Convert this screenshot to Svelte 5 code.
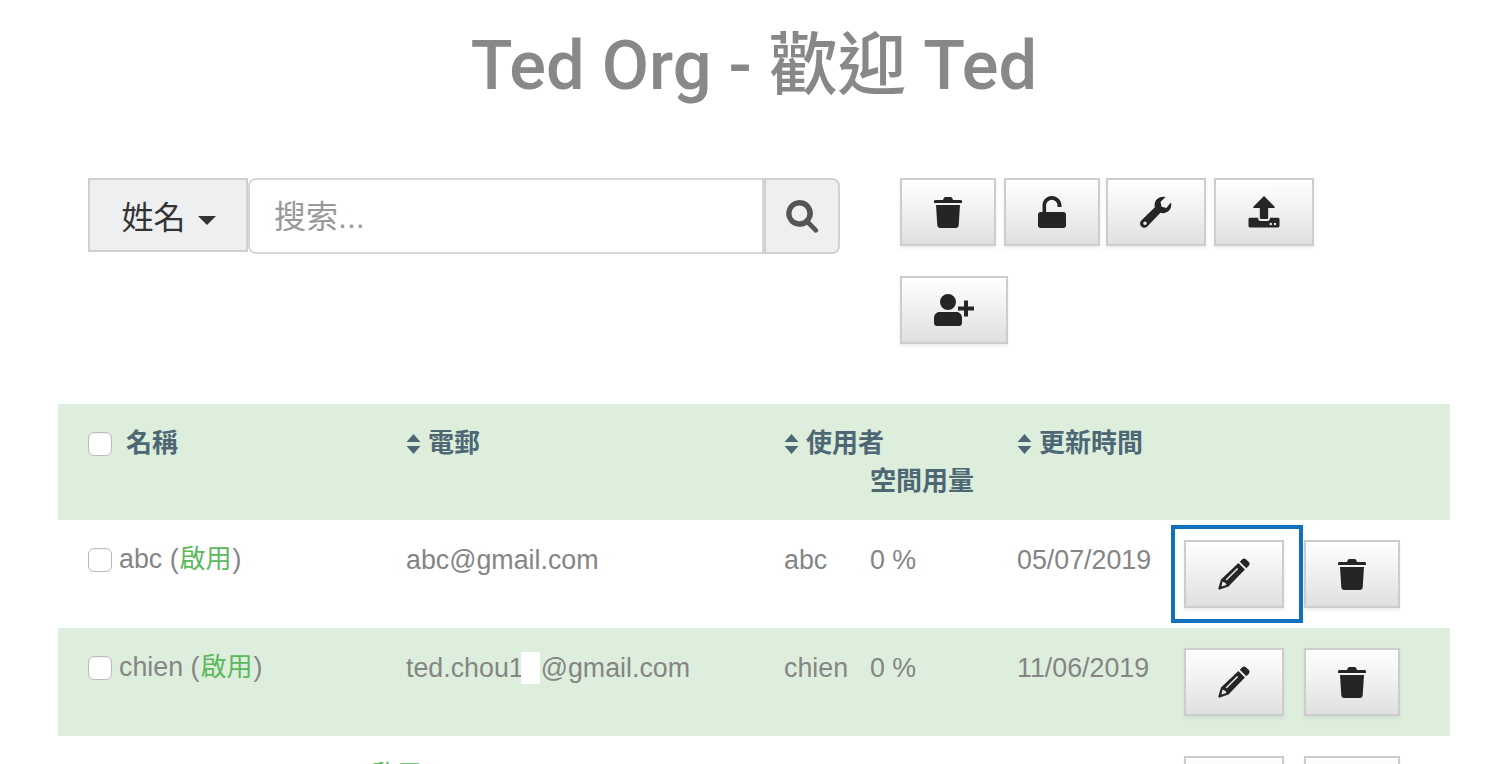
<script>
  const rows = [
    { name: 'abc', email: 'abc@gmail.com', user: 'abc', date: '05/07/2019', focus: true },
    { name: 'chien', email: 'ted.chou1', tail: '@gmail.com', user: 'chien', date: '11/06/2019' }
  ];
</script>

{#snippet trash()}
  <svg class="ico" viewBox="0 0 28 32"><path d="M0 5.500C0 4.700.6 4 1.400 4H9l.6-1.600C10 1.600 10.700 1 11.500 1h5c.8 0 1.500.6 1.900 1.400L19 4h7.600c.8 0 1.400.7 1.400 1.500V7H0zM2 9h24l-1.300 20.200c-.1 1.600-1.300 2.800-2.800 2.800H6.100c-1.500 0-2.700-1.200-2.800-2.800z"/></svg>
{/snippet}
{#snippet pencil()}
  <svg class="ico" viewBox="0 0 32 32"><path fill-rule="evenodd" d="M24.300 1.200c1-1 2.600-1 3.600 0l2.900 2.900c1 1 1 2.600 0 3.600l-2.500 2.500-6.500-6.500zM20.400 5.100l6.500 6.500L10.500 28.500 1.800 31.600c-.9.300-1.700-.5-1.400-1.400L3 21.500zM7.600 21.600l1 1 11.500-11.500-1-1zM4.500 23.500l-1 5 5-1.500-1-2z"/></svg>
{/snippet}
{#snippet caret()}
  <svg class="sort" viewBox="0 0 14 20"><path d="M7 0l7 8H0zM7 20l-7-8h14z"/></svg>
{/snippet}

<main class="page">
  <h1>Ted Org - <span class="cjk">歡迎</span> Ted</h1>

  <section class="tools">
    <div class="search">
      <button class="field-pick">姓名 <i class="drop"></i></button>
      <div class="input">搜索...</div>
      <button class="go" aria-label="搜索">
        <svg viewBox="0 0 32 32" width="32" height="32"><path fill-rule="evenodd" d="M13 0a13 13 0 0 1 10.500 20.700l7.300 7.300a2.300 2.300 0 0 1-3.200 3.200l-7.300-7.300A13 13 0 1 1 13 0zm0 5.300a7.700 7.700 0 1 0 0 15.400 7.700 7.700 0 0 0 0-15.400z"/></svg>
      </button>
    </div>
    <div class="actions">
      <button class="btn w96">{@render trash()}</button>
      <button class="btn w96">
        <svg class="ico" viewBox="0 0 28 32"><path d="M2.500 16H4.500V9.500C4.500 4.300 8.500 0 13.800 0S23.500 4.300 23.500 9.500V11H19.500V9.500a5.700 5.700 0 0 0-11.400 0V16h17.400c1.400 0 2.500 1.100 2.500 2.500v11c0 1.400-1.100 2.500-2.500 2.500h-23C1.100 32 0 30.900 0 29.500v-11C0 17.100 1.100 16 2.500 16z"/></svg>
      </button>
      <button class="btn w100 tight">
        <svg class="ico" viewBox="0 0 32 32"><path fill-rule="evenodd" d="M31 6.500c.7 2.800 0 6-2.200 8.200-2.300 2.300-5.500 3-8.400 2.100L7.300 30.500c-1.700 1.700-4.400 1.700-6 0s-1.700-4.400 0-6l13.600-13.200c-.8-2.900-.1-6 2.200-8.200C19.300.9 22.600.2 25.500.9l-5 5 1.200 4.800 4.600 1.200zM5 25.500a1.800 1.800 0 1 0 0 3.600 1.800 1.800 0 0 0 0-3.600z"/></svg>
      </button>
      <button class="btn w100">
        <svg class="ico" viewBox="0 0 32 33"><path fill-rule="evenodd" d="M16 0l11 11v1.300H20.300V22.500c0 .8-.5 1.300-1.300 1.300H13c-.8 0-1.300-.5-1.300-1.300V12.300H5V11zM0 24c0-.8.7-1.500 1.500-1.500H10v1c0 1.300 1 2.300 2.300 2.300h7.400c1.300 0 2.300-1 2.300-2.300v-1h8.500c.8 0 1.500.7 1.500 1.500v7c0 .8-.7 1.500-1.500 1.500h-29C.7 32.500 0 31.800 0 31zM23 27.500a1.300 1.300 0 1 0 0 2.600 1.300 1.300 0 0 0 0-2.600zm4.300 0a1.300 1.300 0 1 0 0 2.600 1.300 1.300 0 0 0 0-2.600z"/></svg>
      </button>
      <button class="btn w108">
        <svg class="ico wide" viewBox="0 0 40 32"><path d="M14 0a8 8 0 1 1 0 16 8 8 0 0 1 0-16zM5.500 18h17C25.500 18 28 20.500 28 23.500V29c0 1.700-1.300 3-3 3H3c-1.700 0-3-1.300-3-3v-5.500C0 20.500 2.500 18 5.500 18zM30 6.500h4v6h6v4h-6v6h-4v-6h-6v-4h6z"/></svg>
      </button>
    </div>
  </section>

  <section class="table">
    <div class="row head">
      <div class="c1"><span class="check"></span><span class="hname">名稱</span></div>
      <div class="c2">{@render caret()}電郵</div>
      <div class="c3"><div>{@render caret()}使用者</div></div>
      <div class="c4"><div class="under">空間用量</div></div>
      <div class="c5">{@render caret()}更新時間</div>
    </div>

    {#each rows as r, i}
      <div class="row" class:tint={i % 2 === 1}>
        <div class="c1"><span class="check"></span><span class="nm">{r.name} (<em>啟用</em>)</span></div>
        <div class="c2">{r.email}{#if r.tail}<span class="mask"></span>{r.tail}{/if}</div>
        <div class="c3">{r.user}</div>
        <div class="c4">0 %</div>
        <div class="c5">{r.date}</div>
        <div class="c6">
          <span class="hold" class:ring={r.focus}><button class="btn w100">{@render pencil()}</button></span>
          <button class="btn w96">{@render trash()}</button>
        </div>
      </div>
    {/each}

    <div class="row">
      <div class="c1"><span class="check"></span><span class="nm far"><em>啟用</em></span></div>
      <div class="c2"></div>
      <div class="c3"></div>
      <div class="c4"></div>
      <div class="c5"></div>
      <div class="c6">
        <span class="hold"><button class="btn w100">{@render pencil()}</button></span>
        <button class="btn w96">{@render trash()}</button>
      </div>
    </div>
  </section>
</main>

<style>
  :global(body) {
    margin: 0;
    background: #fff;
    overflow: hidden;
    font-family: "Liberation Sans", "Noto Sans CJK TC", sans-serif;
  }
  .page {
    width: 1492px;
    height: 764px;
    overflow: hidden;
    padding: 0 42px 0 58px;
    box-sizing: border-box;
  }
  h1 {
    margin: 0;
    padding-top: 27px;
    height: 178px;
    box-sizing: border-box;
    text-align: center;
    font-family: Roboto, "Noto Sans CJK TC", sans-serif;
    font-size: 68.6px;
    line-height: 78px;
    font-weight: 500;
    color: #888;
  }
  .tools {
    display: flex;
    padding-left: 30px;
    height: 226px;
  }
  .search {
    display: flex;
    width: 752px;
    height: 76px;
    flex: none;
  }
  button { font-family: inherit; padding: 0; margin: 0; cursor: pointer; }
  .field-pick {
    width: 160px;
    height: 74px;
    border: 2px solid #cfcfcf;
    background: #eeeff1;
    color: #333;
    font-size: 32px;
    box-sizing: border-box;
    padding-left: 2px;
  }
  .drop {
    display: inline-block;
    width: 0;
    height: 0;
    border: 9px solid transparent;
    border-bottom: 0;
    border-top: 9px solid #333;
    vertical-align: middle;
    margin-left: 4px;
  }
  .input {
    flex: 1;
    border: 2px solid #d6d6d6;
    border-radius: 8px 0 0 8px;
    box-sizing: border-box;
    font-size: 32px;
    color: #999;
    padding-left: 24px;
    line-height: 74px;
  }
  .go {
    width: 76px;
    height: 76px;
    border: 2px solid #d0d0d0;
    border-radius: 0 8px 8px 0;
    background: #eeeff1;
    box-sizing: border-box;
    display: flex;
    align-items: center;
    justify-content: center;
  }
  .go svg { fill: #555; width: 33px; height: 33px; }
  .actions {
    margin-left: 60px;
    width: 430px;
    display: flex;
    flex-wrap: wrap;
    gap: 30px 8px;
    align-content: flex-start;
  }
  .btn {
    height: 68px;
    border: 2px solid #cdcdcd;
    box-sizing: border-box;
    background: linear-gradient(#fff, #e0e0e0);
    box-shadow: 0 2px 3px rgba(0, 0, 0, .08);
    display: inline-flex;
    align-items: center;
    justify-content: center;
  }
  .w96 { width: 96px; }
  .w100 { width: 100px; }
  .w108 { width: 108px; }
  .tight { margin-left: -2px; }
  .ico { height: 32px; width: 32px; fill: #252525; display: block; }
  .ico.wide { width: 40px; }

  .table { width: 1392px; }
  .row {
    display: flex;
    height: 108px;
    box-sizing: border-box;
    padding-left: 30px;
    font-size: 26.8px;
    color: #858585;
    line-height: 38px;
    padding-top: 20px;
  }
  .tint { background: #ddeedd; }
  .head {
    height: 116px;
    background: #ddeedd;
    color: #4d6874;
    font-weight: 700;
    font-size: 26px;
    padding-top: 20px;
  }
  .c1 { width: 318px; flex: none; display: flex; align-items: flex-start; white-space: nowrap; }
  .c2 { width: 378px; flex: none; }
  .c3 { width: 86px; flex: none; white-space: nowrap; }
  .c4 { width: 147px; flex: none; white-space: nowrap; }
  .c5 { width: 167px; flex: none; white-space: nowrap; }
  .row:not(.head) > .c2,
  .row:not(.head) > .c3,
  .row:not(.head) > .c4,
  .row:not(.head) > .c5 { padding-top: 1px; }
  .c6 { display: flex; flex: none; gap: 20px; height: 68px; }
  .under { margin-top: 38px; }
  .check {
    width: 24px;
    height: 24px;
    border: 1px solid #bbb;
    border-radius: 6px;
    background: #fff;
    margin: 8px 7px 0 0;
    flex: none;
    box-sizing: border-box;
    box-shadow: inset 0 1px 1px rgba(0,0,0,.05);
  }
  .hname { margin-left: 7px; }
  .nm em { font-style: normal; color: #5cb85c; font-size: 26px; margin: 0 1px; }
  .far { margin-left: 250px; }
  .sort { width: 15px; height: 20px; fill: #4d6874; margin-right: 7px; vertical-align: -2px; }
  .mask { display: inline-block; width: 19px; height: 32px; background: #fff; vertical-align: -7px; margin-left: -3px; margin-right: 1px; }
  .hold { position: relative; display: inline-flex; }
  .ring::after {
    content: "";
    position: absolute;
    inset: -15px -19px -15px -13px;
    border: 4.500px solid #1170bd;
    pointer-events: none;
  }
</style>
